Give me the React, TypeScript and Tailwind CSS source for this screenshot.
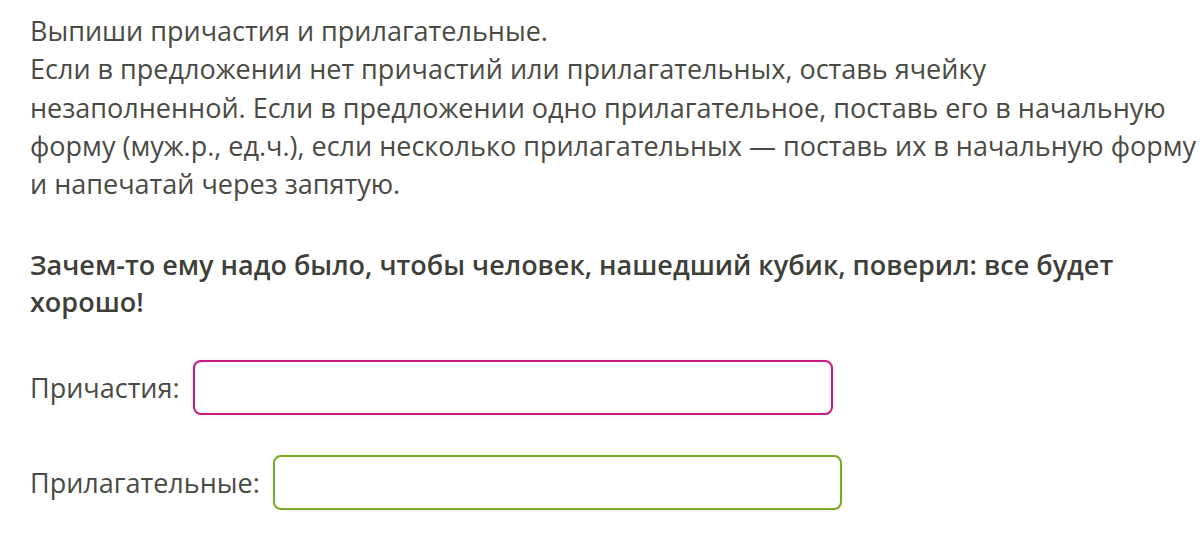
export default function App() {
  return (
    <div className="min-h-[537px] bg-white pl-[30px] pt-[12px] text-[27px] leading-[38.3px] text-[#4a4a44] font-['Open_Sans',sans-serif]">
      <p className="whitespace-nowrap">
        Выпиши причастия и прилагательные.
        <br />
        Если в предложении нет причастий или прилагательных, оставь ячейку
        <br />
        незаполненной. Если в предложении одно прилагательное, поставь его в начальную
        <br />
        форму (муж.р., ед.ч.), если несколько прилагательных — поставь их в начальную форму
        <br />
        и напечатай через запятую.
      </p>

      <p className="mt-[43px] whitespace-nowrap font-semibold leading-[37px] text-[#3f3f3a]">
        Зачем-то ему надо было, чтобы человек, нашедший кубик, поверил: все будет
        <br />
        хорошо!
      </p>

      <div className="mt-[40px] flex items-center gap-[13px]">
        <span>Причастия:</span>
        <input
          type="text"
          className="h-[55px] w-[640px] rounded-[8px] border-2 border-[#c81a7c] bg-white px-3 outline-none shadow-[0_0_4px_rgba(0,0,0,0.08)]"
        />
      </div>

      <div className="mt-[40px] flex items-center gap-[13px]">
        <span>Прилагательные:</span>
        <input
          type="text"
          className="h-[55px] w-[569px] rounded-[8px] border-2 border-[#7aaa22] bg-white px-3 outline-none shadow-[0_0_4px_rgba(0,0,0,0.08)]"
        />
      </div>
    </div>
  )
}
